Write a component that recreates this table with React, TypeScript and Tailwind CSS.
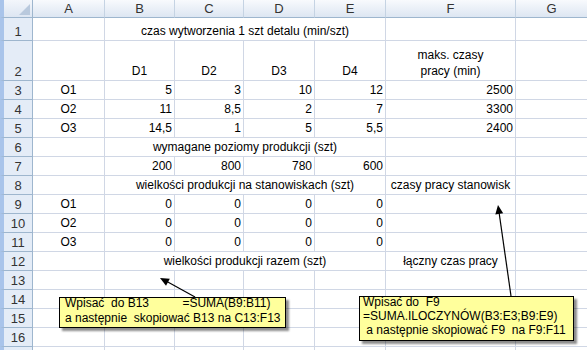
import React from "react";

type Align = "l" | "c" | "r";

const alignClass: Record<Align, string> = {
  l: "justify-start",
  c: "justify-center",
  r: "justify-end",
};

type CellProps = {
  children?: React.ReactNode;
  align?: Align;
  span4?: boolean;
  className?: string;
};

function Cell({ children, align = "r", span4, className = "" }: CellProps) {
  return (
    <div
      className={`flex items-end border-r border-b border-[#d0d7e5] px-[2px] pb-[1px] text-[12px] leading-[15px] whitespace-nowrap text-black ${alignClass[align]} ${span4 ? "col-span-4" : ""} ${className}`}
    >
      {children}
    </div>
  );
}

function RowHead({ n }: { n?: number }) {
  return (
    <div className="flex items-end justify-center border-l-4 border-l-[#a9c4ea] border-r border-b border-r-[#9eb6ce] border-b-[#9eb6ce] bg-[#e4ecf7] text-[13px] leading-[16px] text-[#333]">
      {n}
    </div>
  );
}

function ColHead({ label }: { label: string }) {
  return (
    <div className="flex items-center justify-center border-r border-b border-r-[#c5d3e3] border-b-[#9eb6ce] bg-gradient-to-b from-[#f8fafd] to-[#dde6f2] text-[13px] leading-[16px] text-[#333]">
      {label}
    </div>
  );
}

// B..E values, plus F
const rows: Record<number, { a?: string; v?: string[]; f?: string }> = {
  3: { a: "O1", v: ["5", "3", "10", "12"], f: "2500" },
  4: { a: "O2", v: ["11", "8,5", "2", "7"], f: "3300" },
  5: { a: "O3", v: ["14,5", "1", "5", "5,5"], f: "2400" },
  7: { v: ["200", "800", "780", "600"] },
  9: { a: "O1", v: ["0", "0", "0", "0"] },
  10: { a: "O2", v: ["0", "0", "0", "0"] },
  11: { a: "O3", v: ["0", "0", "0", "0"] },
};

const merged: Record<number, { text: string; f?: string }> = {
  1: { text: "czas wytworzenia 1 szt detalu (min/szt)" },
  6: { text: "wymagane poziomy produkcji (szt)" },
  8: { text: "wielkości produkcji na stanowiskach (szt)", f: "czasy pracy stanowisk" },
  12: { text: "wielkości produkcji razem (szt)", f: "łączny czas pracy" },
};

function SheetRow({ n }: { n: number }) {
  if (n === 2) {
    return (
      <>
        <RowHead n={2} />
        <Cell />
        {["D1", "D2", "D3", "D4"].map((d) => (
          <Cell key={d} align="c">
            {d}
          </Cell>
        ))}
        <Cell align="c" className="leading-[16px] text-center">
          <span>
            maks. czasy
            <br />
            pracy (min)
          </span>
        </Cell>
        <Cell />
      </>
    );
  }
  const m = merged[n];
  if (m) {
    return (
      <>
        <RowHead n={n} />
        <Cell />
        <Cell align="c" span4>
          {m.text}
        </Cell>
        <Cell align="c">{m.f}</Cell>
        <Cell />
      </>
    );
  }
  const r = rows[n] ?? {};
  return (
    <>
      {/* row 17 only peeks in at the bottom edge, its number stays hidden */}
      <RowHead n={n < 17 ? n : undefined} />
      <Cell align="c">{r.a}</Cell>
      {[0, 1, 2, 3].map((i) => (
        <Cell key={i}>{r.v?.[i]}</Cell>
      ))}
      <Cell>{r.f}</Cell>
      <Cell />
    </>
  );
}

export default function App() {
  const rowNums = Array.from({ length: 17 }, (_, i) => i + 1);
  return (
    <div
      className="relative h-[350px] w-[587px] overflow-hidden bg-white"
      style={{ fontFamily: '"Liberation Sans", Arial, sans-serif' }}
    >
      <div className="grid grid-cols-[33px_72px_70px_69px_71px_71px_130px_72px] grid-rows-[18px_23px_40px_repeat(15,19px)]">
        {/* corner */}
        <div className="relative border-l-4 border-l-[#a9c4ea] border-r border-b border-[#9eb6ce] bg-gradient-to-b from-[#f3f6fb] to-[#dde6f2]">
          <svg className="absolute bottom-[2px] right-[2px]" width="11" height="11">
            <polygon points="11,0 11,11 0,11" fill="#b9c9dd" />
          </svg>
        </div>
        {["A", "B", "C", "D", "E", "F", "G"].map((c) => (
          <ColHead key={c} label={c} />
        ))}
        {rowNums.map((n) => (
          <SheetRow key={n} n={n} />
        ))}
      </div>

      {/* arrows from the notes */}
      <svg className="pointer-events-none absolute inset-0" width="587" height="350">
        <line x1="195" y1="297" x2="166" y2="281" stroke="#000" strokeWidth="1.2" />
        <polygon points="160,278 169.8,278.8 166,285.8" fill="#000" />
        <line x1="511" y1="296" x2="499" y2="212" stroke="#000" strokeWidth="1.2" />
        <polygon points="498,205 503.2,213.3 495.3,214.5" fill="#000" />
      </svg>

      <div className="absolute left-[59px] top-[297px] h-[31px] w-[227px] border border-black bg-[#ffff9c] pl-[5px] text-[12px] leading-[15px] text-black shadow-[3px_3px_2px_rgba(0,0,0,0.45)]">
        <div className="-mt-[2px] whitespace-pre">
          {"Wpisać  do B13          =SUMA(B9:B11)"}
          <br />
          {"a następnie  skopiować B13 na C13:F13"}
        </div>
      </div>

      <div className="absolute left-[359px] top-[296px] h-[45px] w-[215px] border border-black bg-[#ffff9c] pl-[3px] text-[12px] leading-[14px] text-black shadow-[3px_3px_2px_rgba(0,0,0,0.45)]">
        <div className="-mt-[2px] whitespace-pre">
          {"Wpisać do  F9"}
          <br />
          {"=SUMA.ILOCZYNÓW(B3:E3;B9:E9)"}
          <br />
          {" a następnie skopiować F9  na F9:F11"}
        </div>
      </div>
    </div>
  );
}
